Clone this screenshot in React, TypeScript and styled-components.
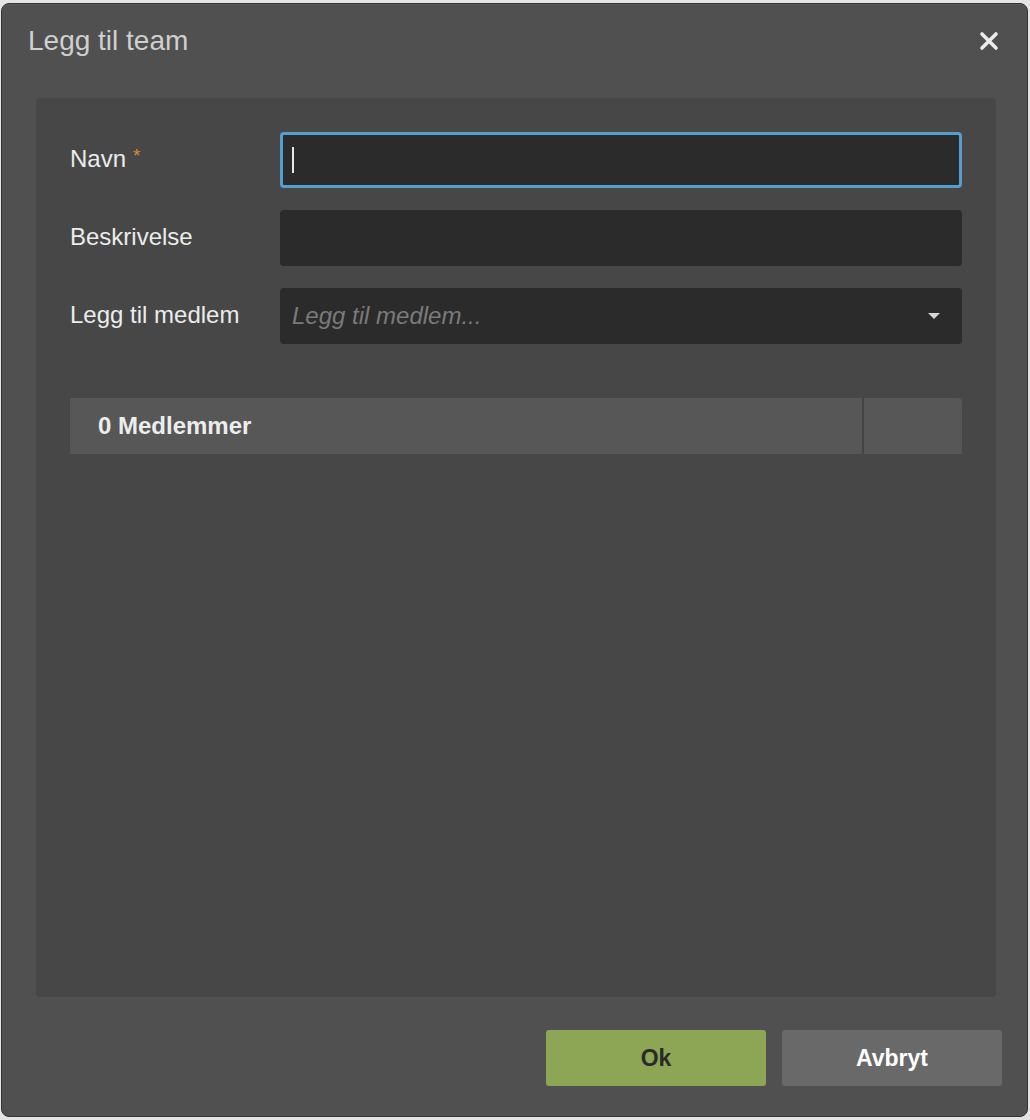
import React from 'react';
import styled, { createGlobalStyle } from 'styled-components';

const GlobalStyle = createGlobalStyle`
  html, body {
    margin: 0;
    padding: 0;
    background: #e4e4e4;
  }
  body {
    font-family: "Liberation Sans", Arial, sans-serif;
  }
`;

const Page = styled.div`
  padding: 3px 2px 3px 1px;
`;

const Dialog = styled.div`
  box-sizing: border-box;
  height: 1114px;
  background: #505050;
  border: 1px solid #353535;
  border-radius: 8px;
  padding: 0 31px 0 34px;
  display: flex;
  flex-direction: column;
  box-shadow: inset 0 1px 0 #5a5a5a;
`;

const Header = styled.div`
  height: 74px;
  display: flex;
  align-items: center;
  justify-content: space-between;
  margin-bottom: 20px;
`;

const Title = styled.h1`
  margin: 0 0 0 -8px;
  font-size: 28px;
  font-weight: 400;
  color: #cfcfcf;
`;

const CloseButton = styled.button`
  background: none;
  border: none;
  padding: 0;
  width: 24px;
  height: 24px;
  margin-right: -5px;
  display: flex;
  align-items: center;
  justify-content: center;
  cursor: pointer;
`;

const Panel = styled.div`
  height: 899px;
  box-sizing: border-box;
  background: #474747;
  border-radius: 4px;
  padding: 34px 34px;
  display: flex;
  flex-direction: column;
`;

const Form = styled.div`
  display: flex;
  flex-direction: column;
  gap: 22px;
`;

const Row = styled.div`
  display: grid;
  grid-template-columns: 210px 1fr;
  align-items: center;
`;

const Label = styled.label`
  font-size: 24px;
  color: #ececec;
  margin-top: -2px;
`;

const Required = styled.span`
  color: #e0892e;
  font-size: 19px;
  vertical-align: 5px;
  margin-left: 7px;
`;

const Field = styled.div<{ $focused?: boolean }>`
  box-sizing: border-box;
  height: 56px;
  background: #2b2b2b;
  border-radius: 4px;
  border: 3px solid ${(p) => (p.$focused ? '#539dd0' : 'transparent')};
  display: flex;
  align-items: center;
  padding: 0 19px 0 9px;
`;

const Caret = styled.span`
  width: 2px;
  height: 26px;
  background: #e8e8e8;
  flex-shrink: 0;
`;

const TextInput = styled.input`
  flex: 1;
  min-width: 0;
  background: none;
  border: none;
  outline: none;
  color: #eee;
  font-family: "Liberation Sans", Arial, sans-serif;
  font-size: 24px;
  padding: 0;
  &::placeholder {
    color: #7a7a7a;
    font-style: italic;
  }
`;

const TableHead = styled.div`
  margin-top: 54px;
  display: grid;
  grid-template-columns: 1fr 98px;
  column-gap: 2px;
  height: 56px;
  background: #444;
  border-radius: 0 4px 0 0;
`;

const HeadCell = styled.div`
  background: #575757;
  display: flex;
  align-items: center;
  padding-left: 28px;
  font-size: 24px;
  font-weight: 700;
  color: #ededed;
  &:last-child {
    border-top-right-radius: 4px;
  }
`;

const Footer = styled.div`
  display: flex;
  justify-content: flex-end;
  gap: 16px;
  margin-top: 33px;
  margin-right: -6px;
`;

const Button = styled.button<{ $primary?: boolean }>`
  width: 220px;
  height: 56px;
  border: none;
  border-radius: 3px;
  background: ${(p) => (p.$primary ? '#8ca656' : '#696969')};
  color: ${(p) => (p.$primary ? '#2a2a2a' : '#ffffff')};
  font-family: "Liberation Sans", Arial, sans-serif;
  font-size: 23px;
  font-weight: 700;
  cursor: pointer;
`;

const CloseIcon = () => (
  <svg width="22" height="22" viewBox="0 0 22 22">
    <path d="M4 4 L18 18 M18 4 L4 18" stroke="#ececec" strokeWidth="3.6" strokeLinecap="round" />
  </svg>
);

const DropdownArrow = () => (
  <svg width="12" height="7" viewBox="0 0 12 7" style={{ flexShrink: 0 }}>
    <path d="M0 0 H12 L6 6 Z" fill="#d6d6d6" />
  </svg>
);

export default function App() {
  return (
    <Page>
      <GlobalStyle />
      <Dialog>
        <Header>
          <Title>Legg til team</Title>
          <CloseButton aria-label="Lukk">
            <CloseIcon />
          </CloseButton>
        </Header>
        <Panel>
          <Form>
            <Row>
              <Label>
                Navn<Required>*</Required>
              </Label>
              <Field $focused>
                <Caret />
                <TextInput type="text" />
              </Field>
            </Row>
            <Row>
              <Label>Beskrivelse</Label>
              <Field>
                <TextInput type="text" />
              </Field>
            </Row>
            <Row>
              <Label>Legg til medlem</Label>
              <Field>
                <TextInput type="text" placeholder="Legg til medlem..." />
                <DropdownArrow />
              </Field>
            </Row>
          </Form>
          <TableHead>
            <HeadCell>0 Medlemmer</HeadCell>
            <HeadCell />
          </TableHead>
        </Panel>
        <Footer>
          <Button $primary>Ok</Button>
          <Button>Avbryt</Button>
        </Footer>
      </Dialog>
    </Page>
  );
}
